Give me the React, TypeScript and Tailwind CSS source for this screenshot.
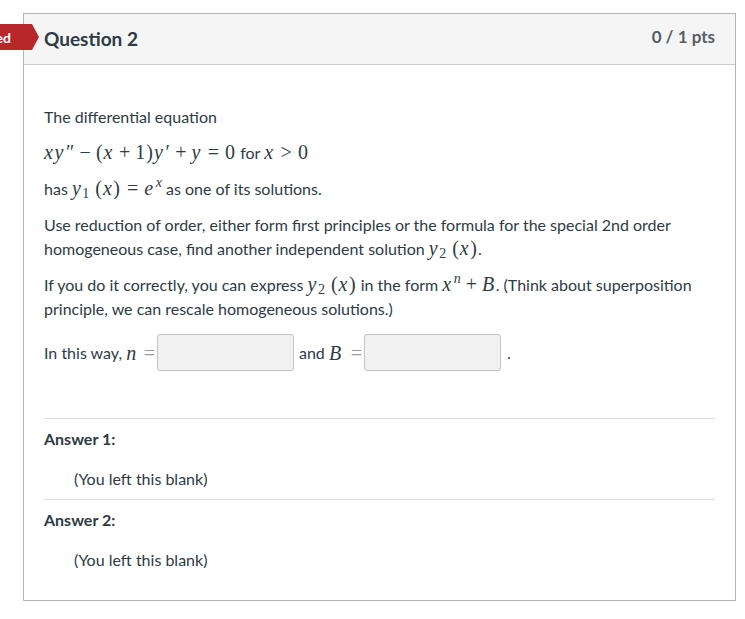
import React from 'react';

const serif = "font-['Liberation_Serif','Times_New_Roman',serif]";

const V: React.FC<{ children: React.ReactNode }> = ({ children }) => (
  <span className={`${serif} italic text-[20px] leading-[0] tracking-[1.5px]`}>{children}</span>
);
const N: React.FC<{ children: React.ReactNode }> = ({ children }) => (
  <span className={`${serif} text-[20px] leading-[0] tracking-[1px]`}>{children}</span>
);
const Bin: React.FC<{ children: React.ReactNode }> = ({ children }) => (
  <span className={`${serif} text-[20px] leading-[0] mx-[5px]`}>{children}</span>
);
const Rel: React.FC<{ children: React.ReactNode }> = ({ children }) => (
  <span className={`${serif} text-[20px] leading-[0] mx-[6px]`}>{children}</span>
);
const Sub: React.FC<{ children: React.ReactNode }> = ({ children }) => (
  <span className={`${serif} text-[14px] leading-[0] relative top-[3px]`}>{children}</span>
);
const Sup: React.FC<{ children: React.ReactNode }> = ({ children }) => (
  <span className={`${serif} italic text-[14px] leading-[0] relative -top-[8px] ml-[1px]`}>{children}</span>
);

const AnswerBlock: React.FC<{ label: string; last?: boolean }> = ({ label, last }) => (
  <div className={`${last ? '' : 'border-b border-[#dcdfe2]'} pt-[8px] pb-[8px]`}>
    <div className="font-bold text-[16px] leading-[24px]">{label}</div>
    <div className="pl-[30px] mt-[16px] text-[16px] leading-[24px]">(You left this blank)</div>
  </div>
);

const App: React.FC = () => {
  return (
    <div className="w-[745px] h-[619px] bg-white relative font-['Lato','Open_Sans',sans-serif] text-[#2d3b45] overflow-hidden">
      {/* status banner, mostly cut off at the left edge */}
      <div className="absolute left-[-90px] top-[24px] h-[26px] flex items-center z-10">
        <div className="h-[26px] w-[122px] bg-[#b8282a] flex items-center justify-end pr-[21px] text-white font-bold text-[14px]">Unanswered</div>
        <svg width="7" height="26" viewBox="0 0 7 26" className="block">
          <polygon points="0,0 7,13 0,26" fill="#b8282a" />
        </svg>
      </div>

      <div className="absolute left-[23px] top-[13px] w-[713px] h-[588px] border border-[#b4b4b4] flex flex-col">
        <div className="h-[51px] bg-[#f5f5f5] border-b border-[#c7cdd1] flex items-center justify-between pl-[20px] pr-[20px] shrink-0">
          <div className="font-bold text-[19px] text-[#2d3b45] mt-[1px]">Question 2</div>
          <div className="font-bold text-[17px] text-[#555e66] -mt-[5px]">0 / 1 pts</div>
        </div>

        <div className="px-[20px] pt-[40px] text-[16px] leading-[24px]">
          <p>The differential equation</p>
          <p className="mt-[12px]">
            <V>xy″</V><Bin>−</Bin><N>(</N><V>x</V><Bin>+</Bin><N>1)</N><V>y′</V><Bin>+</Bin><V>y</V><Rel>=</Rel><N>0</N> for <V>x</V><Rel>&gt;</Rel><N>0</N>
          </p>
          <p className="mt-[12px]">
            has <V>y</V><Sub>1</Sub><N>&nbsp;(</N><V>x</V><N>)</N><Rel>=</Rel><V>e</V><Sup>x</Sup> as one of its solutions.
          </p>
          <p className="mt-[12px]">
            Use reduction of order, either form first principles or the formula for the special 2nd order homogeneous case, find another independent solution <V>y</V><Sub>2</Sub><N>&nbsp;(</N><V>x</V><N>)</N>.
          </p>
          <p className="mt-[12px]">
            If you do it correctly, you can express <V>y</V><Sub>2</Sub><N>&nbsp;(</N><V>x</V><N>)</N> in the form <V>x</V><Sup>n</Sup><Bin>+</Bin><V>B</V>. (Think about superposition principle, we can rescale homogeneous solutions.)
          </p>
          <div className="mt-[13px] flex items-center">
            <span>In this way,&nbsp;</span>
            <V>n</V>
            <span className={`ml-[6px] mr-[2px] text-[#9a9a9a] ${serif} text-[20px]`}>=</span>
            <div className="w-[137px] h-[37px] bg-[#f1f1f1] border border-[#c4c4c4] rounded-[3px]" />
            <span className="ml-[5px]">and&nbsp;</span>
            <V>B</V>
            <span className={`ml-[8px] mr-[2px] text-[#9a9a9a] ${serif} text-[20px]`}>=</span>
            <div className="w-[137px] h-[37px] bg-[#f1f1f1] border border-[#c4c4c4] rounded-[3px]" />
            <span className="ml-[6px]">.</span>
          </div>

          <div className="mt-[47px] border-t border-[#dcdfe2]">
            <AnswerBlock label="Answer 1:" />
            <AnswerBlock label="Answer 2:" last />
          </div>
        </div>
      </div>
    </div>
  );
};

export default App;
